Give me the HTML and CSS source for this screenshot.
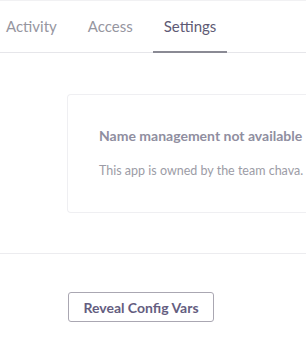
FILE: index.html
```html
<!DOCTYPE html>
<html>
  <head>
    <meta charset="utf-8">
    <title>Settings</title>
    <link rel="stylesheet" href="styles.css">
  </head>
  <body>
    <nav class="tabs">
      <a class="tab" href="#">Activity</a>
      <a class="tab" href="#">Access</a>
      <a class="tab active" href="#">Settings</a>
    </nav>

    <section class="section">
      <div class="notice">
        <h3 class="notice-title">Name management not available</h3>
        <p class="notice-text">This app is owned by the team chava.</p>
      </div>
    </section>

    <section class="section config">
      <button type="button" class="btn">Reveal Config Vars</button>
    </section>
  </body>
</html>
```

FILE: styles.css
```css
html, body {
  margin: 0;
  padding: 0;
  overflow: hidden;
}
body {
  width: 306px;
  height: 352px;
  font-family: Lato, "Open Sans", sans-serif;
  color: #3f3f44;
  background-color: #fff;
  border-top: 1px solid #f1f1f3;
  box-sizing: border-box;
}
.tabs {
  display: flex;
  gap: 9px;
  height: 51px;
  margin-left: -5px;
  border-bottom: 1px solid #e6e6ea;
}
.tab {
  display: flex;
  align-items: center;
  padding: 0 11px 1px;
  font-size: 15px;
  color: #96969f;
  text-decoration: none;
  border-bottom: 2px solid transparent;
  margin-bottom: -1px;
}
.tab.active {
  color: #5e5a74;
  border-bottom-color: #8a8a94;
}
.section {
  padding: 41px 0 40px 67px;
  border-bottom: 1px solid #ececef;
}
.notice {
  width: 239px;
  height: 119px;
  box-sizing: border-box;
  padding: 32px 0 0 31px;
  border: 1px solid #efeff2;
  border-right: none;
  border-radius: 4px 0 0 4px;
  white-space: nowrap;
}
.notice-title {
  margin: 0 0 19px;
  font-size: 14px;
  font-weight: 700;
  color: #8f8ea0;
}
.notice-text {
  margin: 0;
  font-size: 12.5px;
  color: #9c9ca6;
}
.config {
  border-bottom: none;
  padding: 38px 0 0 68px;
}
.btn {
  width: 146px;
  height: 30px;
  padding: 0;
  font-family: Lato, "Open Sans", sans-serif;
  font-size: 14px;
  font-weight: 700;
  color: #645d80;
  background-color: #fff;
  border: 1px solid #aaa7b2;
  border-radius: 3px;
  cursor: pointer;
}
```
